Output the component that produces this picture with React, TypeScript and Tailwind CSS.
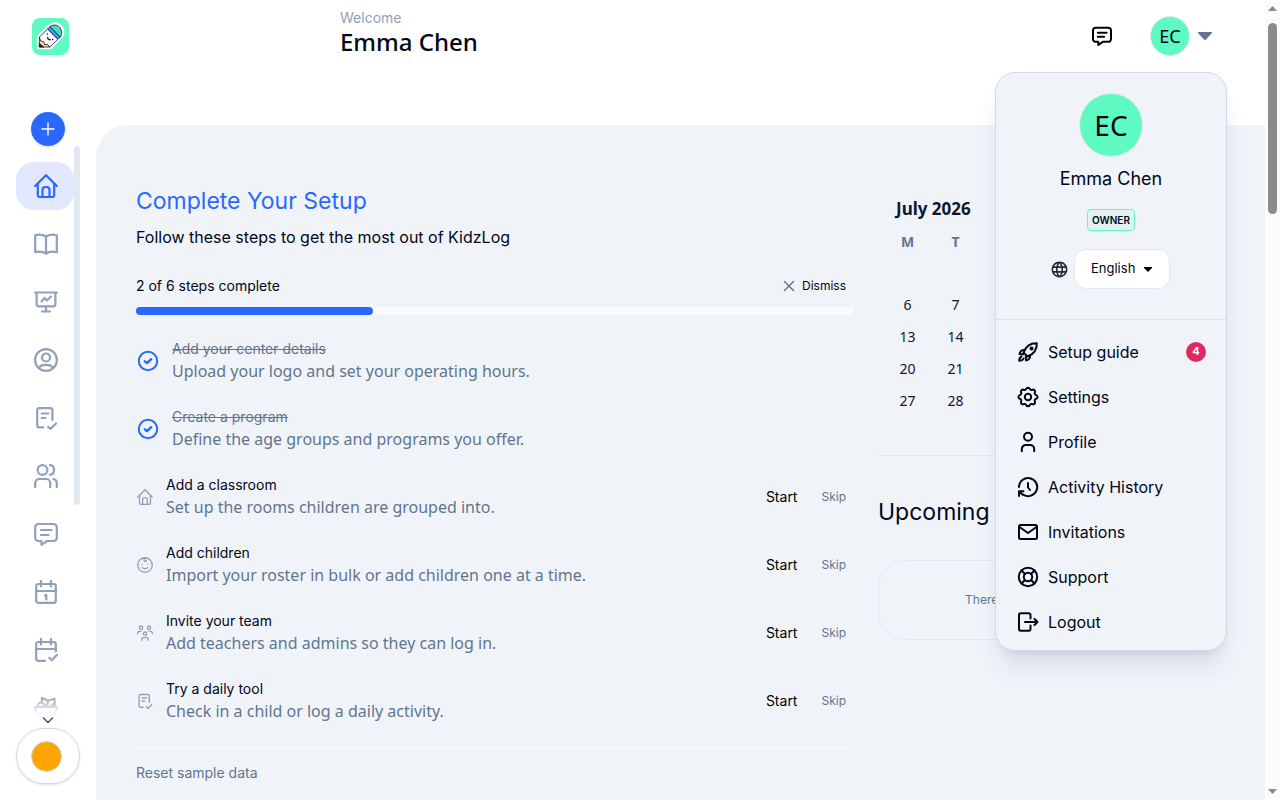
import { useState } from 'react';
import type { ReactNode } from 'react';
import { X } from 'lucide-react';
import { MdLanguage } from 'react-icons/md';

function Icon({ size = 24, stroke = 2, children }: { size?: number; stroke?: number; children: ReactNode }) {
  return (
    <svg
      width={size}
      height={size}
      viewBox="0 0 24 24"
      fill="none"
      stroke="currentColor"
      strokeWidth={stroke}
      strokeLinecap="round"
      strokeLinejoin="round"
      className="shrink-0"
      aria-hidden="true"
    >
      {children}
    </svg>
  );
}

const home = (
  <>
    <path d="M1.200 12 12 1.200 22.800 12" />
    <path d="M3.800 10v11a2 2 0 0 0 2 2h12.400a2 2 0 0 0 2-2V10" />
    <path d="M8.500 23v-7a3 3 0 0 1 3-3h1a3 3 0 0 1 3 3v7" />
  </>
);
const book = (
  <>
    <path d="M12 4.500v17" />
    <path d="M12 4.500C9 2.600 5 2.300 1.200 3.200v17C5 19.300 9 19.600 12 21.500c3-1.900 7-2.200 10.800-1.300v-17C19 2.300 15 2.600 12 4.500Z" />
  </>
);
const board = (
  <>
    <path d="M1 2.500h22M2.600 2.500v11.800a2 2 0 0 0 2 2h14.800a2 2 0 0 0 2-2V2.500M12 16.500v5M8 21.500h8" />
    <path d="m7.500 11.500 3-3.500 2.500 2.500 4-4" />
  </>
);
const userCircle = (
  <>
    <circle cx="12" cy="12" r="10.900" />
    <circle cx="12" cy="9.500" r="4" />
    <path d="M5 20.200c.6-2.500 3.200-3.400 7-3.400s6.400.9 7 3.400" />
  </>
);
const taskCheck = (
  <>
    <path d="M18.400 14V4.200a2 2 0 0 0-2-2H5.200a2 2 0 0 0-2 2v15.200a2 2 0 0 0 2 2h4" />
    <path d="M7.800 7.500h6.400M7.800 12h3.600M14.200 20.800l2.400 2 5.400-5.300" />
  </>
);
const users = (
  <>
    <circle cx="8.500" cy="6" r="4.900" />
    <path d="M1.200 23v-4a4 4 0 0 1 4-4h7a4 4 0 0 1 4 4v4" />
    <path d="M16 1.200c5.400.6 5.400 9 0 9.600M19.500 15c2.200.6 3.300 2 3.300 4v4" />
  </>
);
const chat = (
  <>
    <path d="M4.500 2h15a3.300 3.300 0 0 1 3.300 3.500v10a3.300 3.300 0 0 1-3.300 3.500H13l-5.500 3.800V19h-3a3.300 3.300 0 0 1-3.300-3.500v-10A3.300 3.300 0 0 1 4.500 2Z" />
    <path d="M7 8h10.500M7 13h7.500" />
  </>
);
const calendar = (
  <>
    <rect x="2.200" y="4" width="19.600" height="18.800" rx="2" />
    <path d="M2.200 11h19.600M7 1v5.500M17 1v5.500M11 15.500l1.300-.5v4.500" />
  </>
);
const calendarCheck = (
  <>
    <path d="M11 22.800H4.200a2 2 0 0 1-2-2V6a2 2 0 0 1 2-2h15.600a2 2 0 0 1 2 2v7.500" />
    <path d="M2.200 11h19.600M7 1v5.500M17 1v5.500M15.300 19.800l2.400 2.500 5.300-5.500" />
  </>
);
const bowl = (
  <>
    <path d="M1.200 11h21.600c0 5-2.300 8-5.800 10H7c-3.500-2-5.800-5-5.800-10Z" />
    <path d="M3.500 10.500c0-2.500 2-4 4.200-4l.3-4.500 6 2.800 6.500-2 .5 7.700M8 6.500l4 4M14 4.800l-1 5.700M16.500 10.500l4-3" />
  </>
);
const checkCircle = (
  <>
    <circle cx="12" cy="12" r="9.200" />
    <path d="m8.800 12.300 2.200 1.900 4.200-4" strokeWidth="2.400" />
  </>
);
const child = (
  <>
    <circle cx="12" cy="12" r="10.900" />
    <path d="M8 16c1.800 2 6.200 2 8 0M7.500 11v.1M16.500 11v.1M12.500 1.200c-2.500 1.300-2.800 4.300-.5 5.300 1.400.5 2.500-.5 2-1.500" />
  </>
);
const team = (
  <>
    <circle cx="6" cy="4" r="2.500" />
    <circle cx="18" cy="4" r="2.500" />
    <circle cx="12" cy="13" r="2.500" />
    <path d="M1 13v-1a2.500 2.500 0 0 1 2.500-2.500H6M23 13v-1a2.500 2.500 0 0 0-2.500-2.500H18M7 23v-1a3 3 0 0 1 3-3h4a3 3 0 0 1 3 3v1" />
  </>
);
const rocket = (
  <>
    <path d="M7.500 12.500C9.500 7 13.500 3 20.800 3.200 21 10.500 17 14.500 11.500 16.500Z" />
    <path d="M9 10c-3-.5-4.800 1-5.500 4l4 .2M14 15c.5 3-1 4.800-4 5.500l-.2-4M5.500 16.500C3.500 17.300 3.200 19 3.200 20.800c1.800 0 3.500-.3 4.300-2.300" />
    <circle cx="15.500" cy="8.500" r="1" />
  </>
);
const gear = (
  <>
    <circle cx="12" cy="12" r="3.200" />
    <path d="M10.300 3.700a1.900 1.900 0 0 1 3.400 0 2 2 0 0 0 2.700 1.100 1.900 1.900 0 0 1 2.500 2.500 2 2 0 0 0 1.200 2.800 1.900 1.900 0 0 1 0 3.700 2 2 0 0 0-1.200 2.800 1.900 1.900 0 0 1-2.500 2.500 2 2 0 0 0-2.700 1.200 1.900 1.900 0 0 1-3.400 0 2 2 0 0 0-2.700-1.200 1.900 1.900 0 0 1-2.500-2.500 2 2 0 0 0-1.200-2.800 1.900 1.900 0 0 1 0-3.700 2 2 0 0 0 1.200-2.800 1.900 1.900 0 0 1 2.500-2.500 2 2 0 0 0 2.700-1.100Z" />
  </>
);
const person = (
  <>
    <circle cx="12" cy="6.800" r="4" />
    <path d="M5.800 21.200V19a4 4 0 0 1 4-4h4.400a4 4 0 0 1 4 4v2.200" />
  </>
);
const history = (
  <>
    <path d="M3 12a9.100 9.100 0 1 1 3.600 7.300" />
    <path d="M3 21v-4.700h4.500M3.300 16.600l3.300 3.200M12 8v4.500l2 2.500" />
  </>
);
const mail = (
  <>
    <rect x="3" y="5" width="18" height="14" rx="1.500" />
    <path d="m3.500 7 8.500 6 8.500-6" />
  </>
);
const support = (
  <>
    <circle cx="12" cy="12" r="9.200" />
    <circle cx="12" cy="12" r="4.200" />
    <path d="m5.500 5.500 3.500 3.500M15 15l3.500 3.500M18.500 5.500 15 9M9 15l-3.500 3.500" />
  </>
);
const logout = (
  <>
    <path d="M14.500 8.500V5a1.800 1.800 0 0 0-1.800-1.800H4.800A1.800 1.800 0 0 0 3 5v14a1.800 1.800 0 0 0 1.800 1.800h7.900a1.800 1.800 0 0 0 1.800-1.800v-3.500" />
    <path d="M9 12h12.500M18.500 9l3 3-3 3" />
  </>
);

const navItems = [
  { label: 'Home', icon: home },
  { label: 'Programs', icon: book },
  { label: 'Reports', icon: board },
  { label: 'Children', icon: userCircle },
  { label: 'Attendance', icon: taskCheck },
  { label: 'Staff', icon: users },
  { label: 'Messages', icon: chat },
  { label: 'Calendar', icon: calendar },
  { label: 'Schedule', icon: calendarCheck },
  { label: 'Meals', icon: bowl },
];

const steps = [
  { title: 'Add your center details', text: 'Upload your logo and set your operating hours.', done: true, icon: checkCircle },
  { title: 'Create a program', text: 'Define the age groups and programs you offer.', done: true, icon: checkCircle },
  { title: 'Add a classroom', text: 'Set up the rooms children are grouped into.', done: false, icon: home },
  { title: 'Add children', text: 'Import your roster in bulk or add children one at a time.', done: false, icon: child },
  { title: 'Invite your team', text: 'Add teachers and admins so they can log in.', done: false, icon: team },
  { title: 'Try a daily tool', text: 'Check in a child or log a daily activity.', done: false, icon: taskCheck },
];

const menuItems = [
  { label: 'Setup guide', icon: rocket, badge: 4 },
  { label: 'Settings', icon: gear },
  { label: 'Profile', icon: person },
  { label: 'Activity History', icon: history },
  { label: 'Invitations', icon: mail },
  { label: 'Support', icon: support },
  { label: 'Logout', icon: logout },
];

const weekdays = ['M', 'T', 'W', 'T', 'F', 'S', 'S'];
const weeks = [0, 1, 2, 3, 4].map((w) => weekdays.map((_, d) => w * 7 + d - 1));

function Logo() {
  return (
    <svg width="37" height="37" viewBox="0 0 111 111" aria-hidden="true">
      <rect width="111" height="111" rx="24" fill="#5ffac1" />
      <path d="M22 57 52 28C62 18 76 18 84 27c8 8 8 19 1 27L54 86H22Z" fill="#fff" stroke="#fff" strokeWidth="15" strokeLinejoin="round" />
      <g stroke="#1b1464" strokeWidth="2.500" strokeLinejoin="round">
        <path d="M22 57v30h32Z" fill="#ffe74a" />
        <path d="M22 57 47 33l31 31-24 23-8-8-8 1-3-9-9-2Z" fill="#fff" />
        <path d="m47 33 7-7 31 31-7 7Z" fill="#4a94f5" />
        <path d="M54 26c9-7 21-6 28 1s10 21 3 30Z" fill="#45e0b2" />
        <path d="M22 76v11h13Z" fill="#1b1464" />
      </g>
      <g fill="none" stroke="#1b1464" strokeWidth="4" strokeLinecap="round">
        <path d="M46 48v1M62 64v1M47 58c0 5 3 8 8 7" />
      </g>
    </svg>
  );
}

function Sidebar() {
  return (
    <aside className="flex w-24 shrink-0 flex-col items-center pb-4">
      <a href="#home" aria-label="KidzLog" className="mt-[18px] mr-[-5px] mb-[57px]">
        <Logo />
      </a>
      <button aria-label="Add" className="flex size-[34px] shrink-0 items-center justify-center rounded-full bg-[#2b68ff] text-white shadow-sm">
        <Icon size={16} stroke={2}>
          <path d="M12 3v18M3 12h18" />
        </Icon>
      </button>
      <nav className="relative flex min-h-0 w-16 flex-1 flex-col gap-[10px] overflow-hidden pt-4">
        {navItems.map((item, i) => (
          <a
            key={item.label}
            href={'#' + item.label.toLowerCase()}
            aria-label={item.label}
            className={
              i === 0
                ? 'flex h-12 w-[58px] shrink-0 items-center justify-center rounded-[18px] bg-[#e0e7ff] pl-[2px] text-[#2b68ff]'
                : 'flex h-12 w-[58px] shrink-0 items-center justify-center pl-[2px] text-slate-400'
            }
          >
            <Icon stroke={2.2}>{item.icon}</Icon>
          </a>
        ))}
        <div className="absolute top-0 right-0 h-[359px] w-[6px] rounded-full bg-slate-200" />
        <div className="absolute inset-x-0 bottom-0 flex h-8 items-end justify-center bg-linear-to-b from-transparent via-white/90 to-white pb-[2px] text-slate-600">
          <Icon size={12} stroke={3}>
            <path d="m3 8 9 9 9-9" />
          </Icon>
        </div>
      </nav>
      <button aria-label="Status" className="flex h-14 w-16 shrink-0 items-center justify-center rounded-full border border-[#d3d8ea] pr-1 shadow-sm">
        <span className="size-[31px] rounded-full border border-slate-300 bg-[#ffa500]" />
      </button>
    </aside>
  );
}

function Header() {
  return (
    <header className="flex h-[125px] items-start justify-between pr-[53px] pl-[244px]">
      <div className="pt-2">
        <p className="font-['Inter',sans-serif] text-sm leading-5 text-slate-400">Welcome</p>
        <h1 className="text-2xl leading-7 font-medium text-slate-950">Emma Chen</h1>
      </div>
      <div className="flex items-center pt-4">
        <button aria-label="Messages" className="mr-[38px] text-black">
          <Icon size={20} stroke={2.4}>
            {chat}
          </Icon>
        </button>
        <button className="flex items-center gap-2 text-slate-500" aria-label="Account menu">
          <span className="flex size-10 items-center justify-center rounded-full border border-slate-200 bg-[#5ffac1] text-lg text-slate-950">EC</span>
          <svg width="14" height="8" viewBox="0 0 14 8" fill="currentColor" aria-hidden="true">
            <path d="M0 0h14v1L8 7.500a1.400 1.400 0 0 1-2 0L0 1Z" />
          </svg>
        </button>
      </div>
    </header>
  );
}

function AccountMenu() {
  const [language, setLanguage] = useState('English');

  return (
    <div className="absolute top-[72px] right-[38px] w-[232px] rounded-[20px] border border-[#d3d8ea] bg-[#f0f4f9] pb-[6px] font-['Inter',sans-serif] text-slate-950 shadow-xl shadow-indigo-950/10">
      <div className="flex flex-col items-center border-b border-[#dde3ec] pt-5 pb-[30px]">
        <span className="flex size-16 items-center justify-center rounded-full border border-slate-200 bg-[#5ffac1] font-['Noto_Sans',sans-serif] text-[28px]">EC</span>
        <p className="mt-2 text-lg leading-7">Emma Chen</p>
        <span className="mt-4 flex h-[22px] items-center rounded-[4px] border border-[#5ffac1] bg-[#e0f2f1] px-1 text-[10px] font-semibold">OWNER</span>
        <div className="mt-[18px] flex items-center gap-[5px] pr-[2px]">
          <MdLanguage size={19} className="text-gray-800" aria-hidden="true" />
          <div className="relative">
            <select
              aria-label="Language"
              value={language}
              onChange={(e) => setLanguage(e.target.value)}
              className="h-10 w-24 appearance-none rounded-xl border border-slate-200 bg-white pl-4 text-[13px]"
            >
              <option>English</option>
              <option>Français</option>
            </select>
            <svg width="8" height="5" viewBox="0 0 8 5" className="pointer-events-none absolute top-[18px] right-[18px]" aria-hidden="true">
              <path d="M0 0h8v1L4 5 0 1Z" />
            </svg>
          </div>
        </div>
      </div>
      <ul className="px-5 pt-[9px]">
        {menuItems.map((item) => (
          <li key={item.label}>
            <a href={'#' + item.label.toLowerCase().replace(' ', '-')} className="flex h-[45px] items-center gap-2 text-base">
              <Icon>{item.icon}</Icon>
              {item.label}
              {item.badge && (
                <span className="ml-auto flex size-5 items-center justify-center rounded-full bg-[#de2b5f] text-[11px] font-bold text-white">{item.badge}</span>
              )}
            </a>
          </li>
        ))}
      </ul>
    </div>
  );
}

function SetupGuide() {
  return (
    <section className="col-span-2 font-['Inter',sans-serif] text-slate-950">
      <h2 className="text-[23px] leading-8 text-[#2b68ff]">Complete Your Setup</h2>
      <p className="mt-2 text-base leading-6">Follow these steps to get the most out of KidzLog</p>
      <div className="mt-[27px] flex items-center justify-between">
        <p className="text-sm leading-5">2 of 6 steps complete</p>
        <button className="flex items-center gap-1 px-2 text-xs">
          <X size={18} strokeWidth={2} className="text-slate-500" />
          Dismiss
        </button>
      </div>
      <div role="progressbar" aria-label="Setup progress" aria-valuenow={33} className="mt-[11px] h-2 rounded-full bg-slate-50">
        <div className="h-2 w-[33%] rounded-full bg-[#2b68ff]" />
      </div>
      <ul className="mt-3 border-b border-slate-50 pb-3">
        {steps.map((step) => (
          <li key={step.title} className="flex h-[68px] items-center gap-3">
            <span className={step.done ? 'text-[#2b68ff]' : 'px-px text-slate-400'}>
              <Icon size={step.done ? 24 : 16}>{step.icon}</Icon>
            </span>
            <div className="flex-1">
              <h3 className={step.done ? 'text-sm leading-5 text-slate-500 line-through' : 'text-sm leading-5'}>{step.title}</h3>
              <p className="font-['Noto_Sans',sans-serif] text-base leading-6 text-slate-500">{step.text}</p>
            </div>
            {!step.done && (
              <div className="flex items-center gap-2">
                <button className="px-2 text-sm text-black">Start</button>
                <button className="px-2 text-xs text-slate-500">Skip</button>
              </div>
            )}
          </li>
        ))}
      </ul>
      <button className="mt-[15px] text-sm leading-5 text-slate-500">Reset sample data</button>
    </section>
  );
}

function RightColumn() {
  return (
    <section>
      <div className="border-b border-slate-200 pb-[38px]">
        <h2 className="px-[18px] pt-[10px] text-[17px] leading-7 font-bold text-slate-900">July 2026</h2>
        <table className="mx-auto mt-[3px] w-[336px] table-fixed text-center text-sm text-slate-900">
          <thead>
            <tr className="h-[31px] text-slate-500">
              {weekdays.map((day, i) => (
                <th key={i} className="p-0 font-bold">{day}</th>
              ))}
            </tr>
          </thead>
          <tbody>
            {weeks.map((week, i) => (
              <tr key={i} className="h-8">
                {week.map((day) => (
                  <td key={day} className="p-0">{day > 0 && day < 32 ? day : ''}</td>
                ))}
              </tr>
            ))}
          </tbody>
        </table>
      </div>
      <h2 className="mt-10 font-['Inter',sans-serif] text-[23px] leading-8 text-slate-950">Upcoming Events</h2>
      <p className="mt-8 flex h-20 items-center justify-center rounded-[28px] border border-slate-200 font-['Inter',sans-serif] text-xs text-slate-500">
        There are no upcoming events
      </p>
    </section>
  );
}

function PageScrollbar() {
  return (
    <div className="flex w-[15px] shrink-0 flex-col items-center justify-between bg-[#fcfcfc] py-[6px]" aria-hidden="true">
      <div>
        <svg width="9" height="5" viewBox="0 0 9 5" fill="#8b8b8b">
          <path d="M4.500 0 9 5H0Z" />
        </svg>
        <div className="mt-3 h-[191px] w-[9px] rounded-full bg-[#8b8b8b]" />
      </div>
      <svg width="9" height="5" viewBox="0 0 9 5" fill="#8b8b8b">
        <path d="M0 0h9L4.500 5Z" />
      </svg>
    </div>
  );
}

export default function App() {
  return (
    <div className="flex h-screen overflow-hidden bg-white font-['Noto_Sans',sans-serif]">
      <Sidebar />
      <div className="relative flex min-w-0 flex-1 flex-col">
        <Header />
        <main className="grid flex-1 grid-cols-3 gap-6 overflow-hidden rounded-tl-[32px] bg-[#f0f4f9] px-10 pt-[60px]">
          <SetupGuide />
          <RightColumn />
        </main>
        <AccountMenu />
      </div>
      <PageScrollbar />
    </div>
  );
}
